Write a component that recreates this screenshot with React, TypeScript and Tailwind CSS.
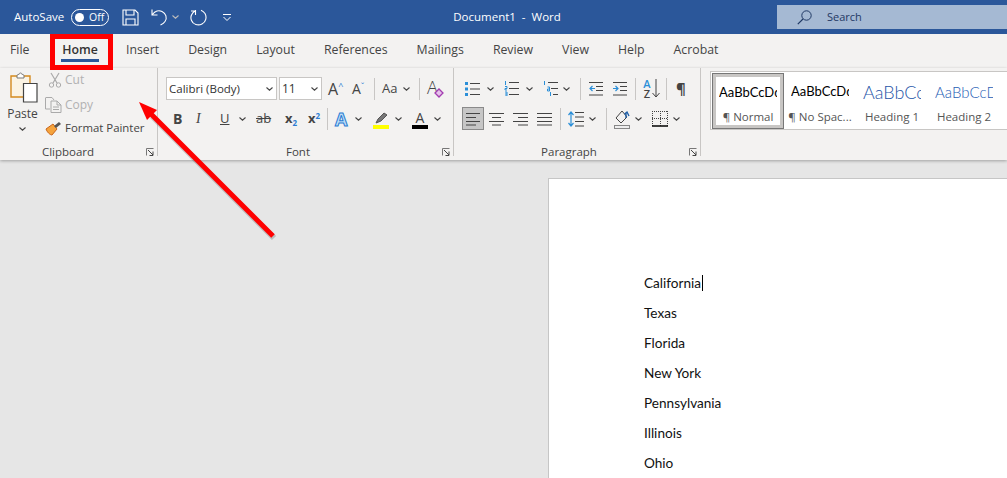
import React from 'react';

const TABS = ['Insert', 'Design', 'Layout', 'References', 'Mailings', 'Review', 'View', 'Help', 'Acrobat'];
const STATES = ['California', 'Texas', 'Florida', 'New York', 'Pennsylvania', 'Illinois', 'Ohio'];

const Chev = ({ className = '' }: { className?: string }) => (
  <svg width="7" height="4" viewBox="0 0 7 4" className={`shrink-0 ${className}`}>
    <path d="M0.5 0.5 L3.5 3.2 L6.5 0.5" fill="none" stroke="#444" strokeWidth="1.1" />
  </svg>
);

const Sep = ({ className = '' }: { className?: string }) => (
  <div className={`w-px h-[22px] bg-[#c8c6c4] shrink-0 ${className}`} />
);

const Launcher = ({ className = '' }: { className?: string }) => (
  <svg width="8" height="8" viewBox="0 0 8 8" className={`shrink-0 ${className}`}>
    <path d="M0.5 7.5 V0.5 H7.5" fill="none" stroke="#777" />
    <path d="M2 2 L7 7 M7 3.5 V7.5 H3.5" fill="none" stroke="#444" />
  </svg>
);

const Lines = ({ w = 14, d }: { w?: number; d: string }) => (
  <svg width={w} height="14" viewBox={`0 0 ${w} 14`} className="shrink-0">
    <path d={d} stroke="#444" strokeWidth="1" fill="none" />
  </svg>
);

const GroupLabel = ({ text, w, className }: { text: string; w: string; className: string }) => (
  <div className="flex items-center h-[14px] mt-auto mb-[1px]">
    <span className={`text-center text-[11.5px] text-[#444] ${w}`}>{text}</span>
    <Launcher className={className} />
  </div>
);

const StyleCell = ({ sample, name, sampleClass }: { sample: string; name: string; sampleClass: string }) => (
  <div className="w-[72px] h-[56px] flex flex-col items-center shrink-0">
    <div className="h-[31px] w-[58px] overflow-hidden flex items-center justify-start mt-[4px]">
      <span className={`whitespace-nowrap ${sampleClass}`}>{sample}</span>
    </div>
    <span className="text-[11.5px] leading-[18px] text-[#555] whitespace-nowrap font-['Open_Sans',sans-serif]">{name}</span>
  </div>
);

export default function App() {
  return (
    <div className="relative w-[1007px] h-[478px] overflow-hidden bg-[#e6e6e6] flex flex-col font-['Open_Sans',sans-serif]">
      {/* Title bar */}
      <div className="h-[34px] bg-[#2b579a] flex items-center shrink-0 text-white">
        <span className="ml-[14px] text-[11.5px] w-[50px] whitespace-nowrap">AutoSave</span>
        <div className="ml-[7px] w-[38px] h-[17px] rounded-full border border-white flex items-center shrink-0">
          <div className="ml-[3px] w-[9px] h-[9px] rounded-full bg-white" />
          <span className="ml-[5px] text-[10.5px] leading-none">Off</span>
        </div>
        <svg width="17" height="17" viewBox="0 0 17 17" className="ml-[13px] shrink-0">
          <path d="M1 1 H13 L16 4 V16 H1 Z M4 1 V6 H12 V1 M4 16 V10 H13 V16" fill="none" stroke="#fff" strokeWidth="1.1" />
        </svg>
        <svg width="17" height="18" viewBox="0 0 17 18" className="ml-[12px] shrink-0">
          <path d="M1 1.5 V7 H6.5 M1.5 6.5 C4 3 8 2 11 3.5 C15 5.5 16.5 10 14 13.5 C13 15 11.5 16 9.5 17" fill="none" stroke="#fff" strokeWidth="1.1" />
        </svg>
        <Chev className="ml-[4px] invert" />
        <svg width="17" height="17" viewBox="0 0 17 17" className="ml-[11px] shrink-0">
          <path d="M5 2 C1.5 4 0 8 1.5 11.5 C3 15.5 8 17 12 15 C16 13 17 8 15 4.5 C14 3 13 2 11 1.2 M5.5 1 V6 M5.5 2 H1" fill="none" stroke="#fff" strokeWidth="1.1" />
        </svg>
        <svg width="8" height="7" viewBox="0 0 8 7" className="ml-[16px] shrink-0">
          <path d="M0 0.5 H8 M0.5 3 L4 6.5 L7.5 3" fill="none" stroke="#fff" strokeWidth="1" />
        </svg>
        <span className="ml-[222px] w-[108px] text-[11.5px] whitespace-nowrap text-center">Document1&nbsp; -&nbsp; Word</span>
        <div className="ml-[216px] w-[230px] h-[24px] bg-[#a5b9d3] flex items-center shrink-0">
          <svg width="15" height="15" viewBox="0 0 15 15" className="ml-[20px] shrink-0">
            <circle cx="9.5" cy="5.5" r="4.7" fill="none" stroke="#1f3864" strokeWidth="1" />
            <path d="M6 9 L0.8 14.2" stroke="#1f3864" strokeWidth="1.2" />
          </svg>
          <span className="ml-[15px] text-[11px] text-[#1f3864]">Search</span>
        </div>
      </div>

      {/* Tabs */}
      <div className="h-[34px] bg-[#f3f2f1] flex items-center shrink-0 text-[12.3px] text-[#444] pb-[2px]">
        <span className="ml-[10px] w-[18px]">File</span>
        <div className="ml-[33px] w-[38px] h-full relative flex items-center justify-center">
          <span className="font-semibold text-[#333]">Home</span>
          <div className="absolute left-0 right-0 top-[25px] h-[3px] bg-[#2b579a]" />
        </div>
        <div className="flex items-center gap-[29px] ml-[27px]">
          {TABS.map(t => <span key={t}>{t}</span>)}
        </div>
      </div>

      {/* Ribbon */}
      <div className="h-[92px] bg-[#f3f2f1] flex shrink-0 relative z-10 shadow-[0_1px_3px_rgba(0,0,0,0.3)] text-[#444]">
        {/* Clipboard */}
        <div className="w-[157px] flex flex-col shrink-0">
          <div className="flex h-[72px]">
            <div className="w-[45px] flex flex-col items-center shrink-0">
              <svg width="28" height="31" viewBox="0 0 28 31" className="mt-[4px] ml-[3px] shrink-0">
                <path d="M1 4 H20 V25 H1 Z" fill="#fbf3e3" stroke="#d58a1e" strokeWidth="1.4" />
                <path d="M7 4 C7 2.5 8 2.5 9 2.5 C9 0.5 12 0.5 12 2.5 C13 2.5 14 2.5 14 4 V6 H7 Z" fill="#fff" stroke="#777" />
                <path d="M13.5 11.5 H27 V30 H13.5 Z" fill="#fff" stroke="#444" strokeWidth="1.2" />
              </svg>
              <span className="text-[12px] mt-[3px] leading-[16px]">Paste</span>
              <Chev className="mt-[5px]" />
            </div>
            <div className="flex flex-col mt-[1px] text-[12px]">
              <div className="flex items-center h-[24px] text-[#b1b1b1] mt-[-1px]">
                <svg width="14" height="16" viewBox="0 0 14 16" className="ml-[3px] shrink-0">
                  <path d="M3 1 L9 11 M11 1 L5 11" stroke="#aaa" strokeWidth="1.2" fill="none" />
                  <circle cx="3.5" cy="13" r="2.2" fill="none" stroke="#aaa" />
                  <circle cx="10.5" cy="13" r="2.2" fill="none" stroke="#aaa" />
                </svg>
                <span className="ml-[3px]">Cut</span>
              </div>
              <div className="flex items-center h-[25px] text-[#b1b1b1]">
                <svg width="17" height="16" viewBox="0 0 17 16" className="shrink-0">
                  <path d="M1 .5 H7 L9 3 M.5 .5 V12 H5 M6 4 H12 L16 8 V15.5 H6 Z M12 4 V8 H16 M8 10 H14 M8 12.5 H14" stroke="#aaa" fill="none" />
                </svg>
                <span className="ml-[3px]">Copy</span>
              </div>
              <div className="flex items-center h-[22px]">
                <svg width="17" height="15" viewBox="0 0 17 15" className="shrink-0">
                  <path d="M1 8 L8 3 L12 8 L7 14 C5 14 2 11 1 8 Z" fill="#f5a33c" stroke="#c8641a" />
                  <path d="M9 5 L14 1 L16 3 L11 7 Z" fill="#555" />
                </svg>
                <span className="ml-[3px] whitespace-nowrap text-[11.4px]">Format Painter</span>
              </div>
            </div>
          </div>
          <GroupLabel text="Clipboard" w="w-[136px]" className="ml-[10px]" />
        </div>
        <div className="w-px h-[88px] bg-[#c8c6c4] shrink-0" />

        {/* Font */}
        <div className="w-[295px] flex flex-col shrink-0">
          <div className="flex items-center h-[23px] mt-[9px]">
            <div className="ml-[8px] w-[111px] h-full bg-white border border-[#c8c6c4] flex items-center shrink-0">
              <span className="ml-[2px] text-[11.5px] text-[#333] whitespace-nowrap">Calibri (Body)</span>
              <Chev className="ml-auto mr-[3px]" />
            </div>
            <div className="ml-[2px] w-[43px] h-full bg-white border border-[#c8c6c4] flex items-center shrink-0">
              <span className="ml-[2px] text-[12px] text-[#333]">11</span>
              <Chev className="ml-auto mr-[3px]" />
            </div>
            <span className="ml-[6px] w-[16px] text-[16px] leading-none flex items-start">A<span className="text-[9px] text-[#2b7cd3] leading-none">^</span></span>
            <span className="ml-[8px] w-[16px] text-[14px] leading-none flex items-start">A<span className="text-[9px] text-[#2b7cd3] leading-none">ˇ</span></span>
            <Sep className="ml-[6px]" />
            <span className="ml-[7px] w-[16px] text-[13px] whitespace-nowrap">Aa</span>
            <Chev className="ml-[5px]" />
            <Sep className="ml-[9px]" />
            <div className="ml-[7px] w-[17px] h-[18px] relative shrink-0">
              <span className="absolute left-0 top-[-2px] text-[18px] leading-none font-light">A</span>
              <svg width="10" height="10" viewBox="0 0 10 10" className="absolute right-0 bottom-0">
                <path d="M1 5 L5 1 L9 5 L5 9 Z" fill="#e5c3ea" stroke="#a33cb0" strokeWidth="1.3" />
              </svg>
            </div>
          </div>
          <div className="flex items-center h-[23px] mt-[7px]">
            <span className="ml-[15px] w-[8px] text-[14px] font-bold">B</span>
            <span className="ml-[15px] w-[8px] text-[14px] italic font-['Liberation_Serif',serif]">I</span>
            <span className="ml-[16px] w-[10px] text-[13px] underline">U</span>
            <Chev className="ml-[9px]" />
            <span className="ml-[10px] w-[16px] text-[13px] line-through">ab</span>
            <span className="ml-[13px] w-[12px] text-[13px] font-bold flex items-baseline">x<span className="text-[8px] text-[#2b7cd3] translate-y-[3px]">2</span></span>
            <span className="ml-[11px] w-[12px] text-[13px] font-bold flex items-baseline">x<span className="text-[8px] text-[#2b7cd3] -translate-y-[4px]">2</span></span>
            <Sep className="ml-[7px]" />
            <span className="ml-[7px] w-[15px] text-[18px] leading-none font-bold text-[#bfe0f7] [-webkit-text-stroke:1px_#2b7cd3]">A</span>
            <Chev className="ml-[5px]" />
            <div className="ml-[11px] w-[16px] h-[20px] flex flex-col items-center justify-end shrink-0">
              <svg width="14" height="14" viewBox="0 0 14 14">
                <path d="M2 12 L4 8 L10 2 L13 4 L7 10 Z" fill="#777" stroke="#555" />
              </svg>
              <div className="w-full h-[4px] bg-[#ffff00]" />
            </div>
            <Chev className="ml-[6px]" />
            <div className="ml-[10px] w-[16px] h-[20px] flex flex-col items-center justify-end shrink-0">
              <span className="text-[14px] leading-[15px]">A</span>
              <div className="w-full h-[4px] bg-black" />
            </div>
            <Chev className="ml-[6px]" />
          </div>
          <GroupLabel text="Font" w="w-[280px]" className="ml-[4px]" />
        </div>
        <div className="w-px h-[88px] bg-[#c8c6c4] shrink-0" />

        {/* Paragraph */}
        <div className="w-[246px] flex flex-col shrink-0">
          <div className="flex items-center h-[23px] mt-[9px]">
            <svg width="15" height="14" viewBox="0 0 15 14" className="ml-[11px] shrink-0">
              <path d="M5 1.5 H15 M5 7 H15 M5 12.5 H15" stroke="#444" />
              <path d="M0 0 H3 V3 H0 Z M0 5.5 H3 V8.5 H0 Z M0 11 H3 V14 H0 Z" fill="#2b8fd8" />
            </svg>
            <Chev className="ml-[7px]" />
            <svg width="15" height="15" viewBox="0 0 15 15" className="ml-[10px] shrink-0">
              <path d="M5 1.5 H15 M5 7.5 H15 M5 13.5 H15" stroke="#444" />
              <path d="M1.5 0 V4 M1 5.5 H3 V7.5 H1 V9 H3 M1 11 H3 V15 H1 M1 13 H3" stroke="#2b8fd8" fill="none" />
            </svg>
            <Chev className="ml-[7px]" />
            <svg width="15" height="15" viewBox="0 0 15 15" className="ml-[10px] shrink-0">
              <path d="M5 1.5 H15 M8 7.5 H15 M10 13.5 H15" stroke="#444" />
              <path d="M1.5 0 V4 M4.5 6 H6.5 V10 H4.5 V8 H6 M7.5 11 V15" stroke="#2b8fd8" fill="none" />
            </svg>
            <Chev className="ml-[5px]" />
            <Sep className="ml-[10px]" />
            <svg width="14" height="14" viewBox="0 0 14 14" className="ml-[8px] shrink-0">
              <path d="M0 .5 H14 M7 4.5 H14 M7 8.5 H14 M0 13 H14" stroke="#444" />
              <path d="M6 6.5 H1 M3.5 4 L1 6.5 L3.5 9" stroke="#2b8fd8" fill="none" strokeWidth="1.2" />
            </svg>
            <svg width="14" height="14" viewBox="0 0 14 14" className="ml-[10px] shrink-0">
              <path d="M0 .5 H14 M7 4.5 H14 M7 8.5 H14 M0 13 H14" stroke="#444" />
              <path d="M0 6.5 H5 M2.5 4 L5 6.5 L2.5 9" stroke="#2b8fd8" fill="none" strokeWidth="1.2" />
            </svg>
            <Sep className="ml-[8px]" />
            <div className="ml-[6px] w-[10px] flex flex-col items-center text-[11px] font-semibold leading-[10px] shrink-0">
              <span className="text-[#2b8fd8]">A</span>
              <span>Z</span>
            </div>
            <svg width="8" height="19" viewBox="0 0 8 19" className="shrink-0">
              <path d="M4 0 V18 M.5 14 L4 18 L7.5 14" stroke="#444" fill="none" />
            </svg>
            <Sep className="ml-[6px]" />
            <span className="ml-[9px] w-[12px] text-[15px] font-bold leading-none">¶</span>
          </div>
          <div className="flex items-center h-[23px] mt-[7px]">
            <div className="ml-[8px] w-[22px] h-[23px] bg-[#c6c6c6] border border-[#8a8a8a] flex items-center justify-center shrink-0">
              <Lines d="M0 1.5 H14 M0 5.5 H10 M0 9.5 H14 M0 13 H10" />
            </div>
            <div className="ml-[5px]"><Lines w={15} d="M0 1.5 H15 M3 5.5 H12 M0 9.5 H15 M3 13 H12" /></div>
            <div className="ml-[9px]"><Lines w={15} d="M0 1.5 H15 M5 5.5 H15 M0 9.5 H15 M5 13 H15" /></div>
            <div className="ml-[9px]"><Lines w={15} d="M0 1.5 H15 M0 5.5 H15 M0 9.5 H15 M0 13 H15" /></div>
            <Sep className="ml-[8px]" />
            <svg width="16" height="16" viewBox="0 0 16 16" className="ml-[7px] shrink-0">
              <path d="M7 1.5 H16 M7 6 H16 M7 10.5 H16 M7 15 H16" stroke="#444" />
              <path d="M3 1 V15 M.5 4 L3 1 L5.5 4 M.5 12 L3 15 L5.5 12" stroke="#2b8fd8" fill="none" strokeWidth="1.2" />
            </svg>
            <Chev className="ml-[5px]" />
            <Sep className="ml-[10px]" />
            <div className="ml-[7px] w-[16px] h-[20px] flex flex-col justify-end shrink-0">
              <svg width="16" height="15" viewBox="0 0 16 15">
                <path d="M2 8 L8 1 L13 7 L7 13 Z" fill="none" stroke="#444" />
                <path d="M12 3 V8 M10.5 4 L13 2 L15 6" stroke="#1f5fa8" fill="none" strokeWidth="1.4" />
              </svg>
              <div className="w-full h-[4px] bg-[#eee] border border-[#888]" />
            </div>
            <Chev className="ml-[5px]" />
            <svg width="16" height="16" viewBox="0 0 16 16" className="ml-[10px] shrink-0">
              <path d="M0 .5 H16 M.5 0 V15 M15.5 0 V15 M0 7.5 H16 M8.5 0 V15" stroke="#444" strokeDasharray="1 1" fill="none" />
              <path d="M0 15 H16" stroke="#111" strokeWidth="1.6" />
            </svg>
            <Chev className="ml-[5px]" />
          </div>
          <GroupLabel text="Paragraph" w="w-[230px]" className="ml-[5px]" />
        </div>
        <div className="w-px h-[88px] bg-[#c8c6c4] shrink-0" />

        {/* Styles */}
        <div className="ml-[9px] mt-[3px] w-[297px] h-[59px] bg-white border border-r-0 border-[#c8c6c4] flex items-center pl-px shrink-0 font-['Lato',sans-serif]">
          <div className="border border-[#777] shrink-0">
            <div className="border-[3px] border-[#c8c6c4] w-[70px] h-[54px] flex flex-col items-center overflow-hidden pt-[2px]">
              <div className="h-[28px] w-[58px] overflow-hidden flex items-center shrink-0">
                <span className="whitespace-nowrap text-[13px] text-black">AaBbCcDdEe</span>
              </div>
              <span className="text-[11.5px] leading-[14px] mt-[3px] text-[#555] whitespace-nowrap font-['Open_Sans',sans-serif]">¶ Normal</span>
            </div>
          </div>
          <StyleCell sample="AaBbCcDdEe" name="¶ No Spac..." sampleClass="text-[13px] text-black" />
          <StyleCell sample="AaBbCcDd" name="Heading 1" sampleClass="text-[18px] font-light text-[#1f56a8]" />
          <StyleCell sample="AaBbCcDd" name="Heading 2" sampleClass="text-[15px] font-light text-[#1f60b5]" />
        </div>
      </div>

      {/* Document area */}
      <div className="flex-1 pl-[548px] pt-[18px] min-h-0">
        <div className="w-[470px] h-[320px] bg-white border-l border-t border-[#c6c6c6] pl-[95px] pt-[89px] font-['Lato',sans-serif] text-[13.6px] text-[#111]">
          {STATES.map((s, i) => (
            <div key={s} className="h-[30px] leading-[30px] flex items-center">
              {s}
              {i === 0 && <div className="ml-px w-px h-[16px] bg-black" />}
            </div>
          ))}
        </div>
      </div>

      {/* Red annotation overlay */}
      <div className="absolute left-[50px] top-[34px] w-[63px] h-[36px] border-[5px] border-[#f00] z-20" />
      <svg width="1007" height="478" viewBox="0 0 1007 478" className="absolute left-0 top-0 z-20 pointer-events-none">
        <path d="M274 238 L152 116" stroke="#000" strokeOpacity="0.18" strokeWidth="6" />
        <path d="M273 236 L150 113" stroke="#f00" strokeWidth="5" />
        <path d="M139 102 L157 110 L147 120 Z" fill="#f00" />
      </svg>
    </div>
  );
}
